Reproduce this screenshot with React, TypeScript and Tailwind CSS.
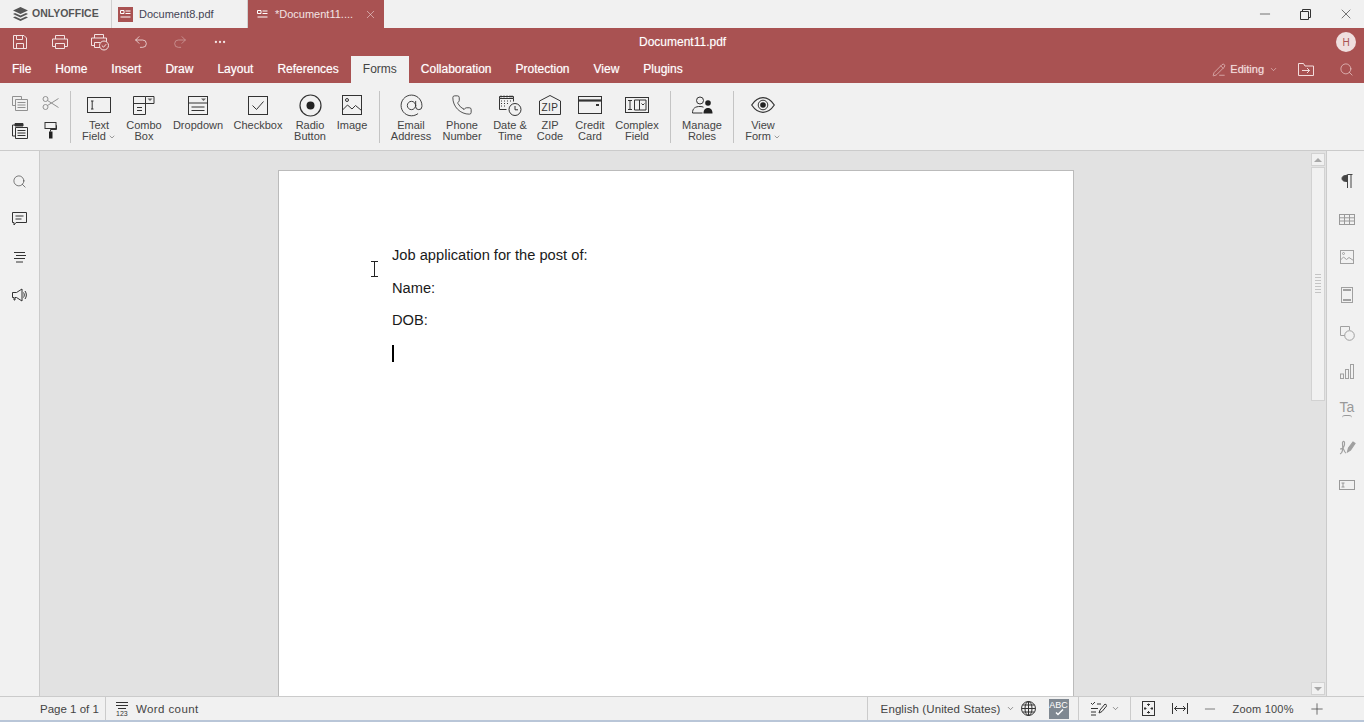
import React from "react";
import { Search, X, Minus, Plus, ChevronDown, Phone, AtSign, Undo2, Redo2, Ellipsis, PencilLine } from "lucide-react";

const S = ({ w = 24, h = 24, vb, children, c = "currentColor", sw = 1, className = "" }: any) => (
  <svg width={w} height={h} viewBox={vb || `0 0 ${w} ${h}`} fill="none" stroke={c} strokeWidth={sw} className={className}>{children}</svg>
);

const SaveI = () => <S w={16} h={16}><path d="M1.5 1.5h10.5l2.5 2.5v10.5h-13z" /><path d="M4.5 1.5v4h6v-4M4.5 14.5v-5h7v5" /></S>;
const PrintI = () => <S w={18} h={16}><path d="M4.5 5V1.5h9V5M4.5 12.5H1.5v-7.5h15v7.5h-3" /><path d="M4.5 9.5h9v5h-9z" /></S>;
const QuickI = () => (
  <S w={20} h={18}>
    <path d="M4.5 5V1.5h9V5M4.5 12.5H1.5v-7.5h15v5" /><path d="M4.5 9.5h6v5h-6z" />
    <circle cx="14" cy="12.5" r="4.5" fill="#a95252" /><path d="M11.8 12.5l1.7 1.7 2.7-3" />
  </S>
);
const TextFieldI = () => <S w={24} h={16}><rect x=".5" y=".5" width="23" height="15" /><path d="M4 4h2.5M4 12h2.5M5.2 4v8" /></S>;
const ComboI = () => (
  <S w={22} h={19}>
    <path d="M.5 .5h12v18H.5zM.5 7.5h12M12.5 .5h8.5v7h-8.5" />
    <path d="M14.5 2.5h5l-2.5 2.5z" fill="#666" stroke="none" />
    <path d="M4 11.5h5M4 14.5h5" />
  </S>
);
const DropI = () => (
  <S w={20} h={19}>
    <rect x=".5" y=".5" width="19" height="18" /><path d="M.5 7h19M3.5 11h13M3.5 14.5h13" />
    <path d="M13 2.5h5l-2.5 2.5z" fill="#666" stroke="none" />
  </S>
);
const CheckI = () => <S w={20} h={19}><rect x=".5" y=".5" width="19" height="18" /><path d="M4.5 9.5l4 4 7-8" /></S>;
const RadioI = () => <S w={23} h={23}><circle cx="11.5" cy="11.5" r="10.5" strokeWidth="1.2" /><circle cx="11.5" cy="11.5" r="4" fill="#222" stroke="none" /></S>;
const ImageI = () => <S w={20} h={20}><rect x=".5" y=".5" width="19" height="19" /><circle cx="5" cy="5" r="1.5" /><path d="M.5 15l5-5 4.5 4 3.5-3.5 6 5" /></S>;
const DateI = () => (
  <S w={23} h={21}>
    <path d="M.5 1.5h14v2H.5zM.5 3.5v11h7M14.5 3.5v3" />
    <path d="M2 .5v2M5 .5v2M8 .5v2M11 .5v2M13 .5v2" />
    <path d="M2 6h2M5 6h2M8 6h2M11 6h2M2 8.5h2M5 8.5h2M8 8.5h2M2 11h2M5 11h2" strokeDasharray="1 1" />
    <circle cx="16" cy="14.5" r="6" /><path d="M16 11v3.8h3" />
  </S>
);
const ZipI = () => (
  <S w={22} h={20}>
    <path d="M.5 6L11 .5 21.5 6v13.5H.5z" />
    <text x="11" y="16" textAnchor="middle" fontSize="10" letterSpacing="0.4" fontFamily="Liberation Sans" fill="#333" stroke="none">ZIP</text>
  </S>
);
const CardI = () => <S w={24} h={18}><rect x=".5" y=".5" width="23" height="17" /><path d="M.5 4.5h23" strokeWidth="2.2" /><path d="M18 9h3" strokeWidth="2" /></S>;
const ComplexI = () => (
  <S w={24} h={16}>
    <rect x=".5" y=".5" width="23" height="15" /><path d="M3 3.5h4M3 12.5h4M5 3.5v9" />
    <path d="M9.5 3h5v10h-5zM14.5 3h6.5v10h-6.5z" /><path d="M16.5 6.5l1.5 1.5 1.5-1.5" />
  </S>
);
const RolesI = () => (
  <S w={21} h={18}>
    <circle cx="8" cy="4.5" r="3.5" /><path d="M.5 17c0-5 3-6.5 7.5-6.5 1.5 0 2.6.3 3.5.7M.5 17h10" />
    <circle cx="16" cy="7" r="2.8" fill="#222" stroke="none" /><path d="M11.5 17.5c0-4 2-5.5 4.5-5.5s4.500 1.500 4.500 5.500z" fill="#222" stroke="none" />
  </S>
);
const EyeI = () => (
  <S w={24} h={16}>
    <path d="M.7 8C4 3 8 .7 12 .7S20 3 23.300 8C20 13 16 15.300 12 15.300S4 13 .7 8z" strokeWidth="1.200" />
    <circle cx="12" cy="8" r="4.800" /><circle cx="12" cy="8" r="2.800" fill="#222" stroke="none" />
  </S>
);
const CopyI = () => <S w={16} h={16}><path d="M.5 1.500h9v2.500M.5 1.500v9h2.500" /><path d="M3.500 4.500h12v11h-12z" /><path d="M5.500 7.500h8M5.500 10h8M5.500 12.500h8" /></S>;
const CutI = () => <S w={17} h={14}><circle cx="3.500" cy="3" r="2.500" /><circle cx="3.500" cy="11" r="2.500" /><path d="M5.500 4.500l11 7M5.500 9.500l11-7" /></S>;
const PasteI = () => <S w={16} h={17}><path d="M3 3H.5v11h2.500" /><path d="M3 1.500h8V4H3z" fill="#333" /><path d="M3.500 5.500h12v11h-12z" /><path d="M5.500 8.500h8M5.500 11h8M5.500 13.500h8" /></S>;
const FormatI = () => (
  <S w={13} h={17}>
    <rect x="1" y=".5" width="11" height="6" strokeWidth="1" /><path d="M12 3.500h.5v4H6.500v2" />
    <rect x="5" y="9.500" width="3.500" height="7" fill="#222" stroke="none" />
  </S>
);

const RB = ({ w, l1, l2, icon, chev }: any) => (
  <div className="flex flex-col items-center shrink-0 h-full" style={{ width: w }}>
    <div className="h-[37px] flex items-center justify-center pt-[7px]">{icon}</div>
    <div className="text-[11px] leading-[11px] text-center whitespace-nowrap text-[#444]">
      <div>{l1}</div>
      {l2 && <div className="flex items-center justify-center gap-[2px]">{l2}{chev && <ChevronDown size={8} strokeWidth={1.500} />}</div>}
    </div>
  </div>
);
const Sep = () => <div className="w-px h-[52px] bg-[#c4c4c4] shrink-0 mt-[8px]" />;

const Menu = ({ t, active }: any) => (
  <div className={active ? "px-3 h-full flex items-center pb-[1px] bg-[#f1f1f1] text-[#444]" : "px-3 h-full flex items-center pb-[1px] text-white [text-shadow:0_0_1px_rgba(255,255,255,0.55)]"}>{t}</div>
);

const SideIcon = ({ children }: any) => <div className="h-[38px] flex items-center justify-center">{children}</div>;
const Dv = () => <div className="w-px h-full bg-[#cbcbcb] shrink-0" />;

export default function App() {
  return (
    <div className="w-[1364px] h-[722px] overflow-hidden flex flex-col font-['Liberation_Sans',Arial,sans-serif] bg-[#f1f1f1]">
      {/* title bar */}
      <div className="h-[28px] flex items-stretch bg-[#f1f1f1] shrink-0">
        <div className="w-[112px] flex items-center pl-[13px] gap-[4px] border-r border-[#d0d0d0] text-[#555]">
          <svg width="15" height="14" viewBox="0 0 15 14" fill="#555">
            <path d="M7.500 0L15 3.500 7.500 7 0 3.500z" /><path d="M2 6l5.500 2.500L13 6l2 1-7.500 3.500L0 7z" /><path d="M2 9.500L7.500 12 13 9.500l2 1L7.500 14 0 10.500z" />
          </svg>
          <span className="text-[10.500px] font-bold whitespace-nowrap">ONLYOFFICE</span>
        </div>
        <div className="w-[136px] flex items-center pl-[6px] gap-[6px] border-r border-[#d0d0d0]">
          <div className="w-[15px] h-[15px] bg-[#a95252] flex items-center justify-center">
            <svg width="11" height="9" viewBox="0 0 11 9" fill="none" stroke="#fff"><path d="M.5 .5h3.500v3h-3.500zM5.500 1h5M5.500 3.500h5M.5 7h10" /></svg>
          </div>
          <span className="text-[11px] text-[#445]">Document8.pdf</span>
        </div>
        <div className="w-[136px] bg-[#a95252] flex items-center pl-[9px] text-[#f3e3e3]">
          <svg width="11" height="9" viewBox="0 0 11 9" fill="none" stroke="#fff"><path d="M.5 .5h3.500v3h-3.500zM5.500 1h5M5.500 3.500h5M.5 7h10" /></svg>
          <span className="text-[11px] ml-[7px] whitespace-nowrap">*Document11....</span>
          <X size={13} strokeWidth={1} className="ml-[11px]" />
        </div>
        <div className="flex-1" />
        <div className="flex items-center text-[#333]">
          <Minus size={16} strokeWidth={1} className="mr-[27px]" />
          <svg width="11" height="11" viewBox="0 0 11 11" fill="none" stroke="#333" className="mr-[27px]"><path d="M.5 2.500h8v8h-8zM2.500 2.500v-2h8v8h-2" /></svg>
          <X size={16} strokeWidth={1} className="mr-[10px]" />
        </div>
      </div>

      {/* red header */}
      <div className="h-[55px] bg-[#a95252] shrink-0 flex flex-col text-[#f3e3e3]">
        <div className="h-[28px] flex items-center relative shrink-0">
          <div className="w-[40px] flex justify-center"><SaveI /></div>
          <div className="w-[40px] flex justify-center"><PrintI /></div>
          <div className="w-[40px] flex justify-center"><QuickI /></div>
          <div className="w-[41px] flex justify-center"><Undo2 size={16} strokeWidth={1.200} /></div>
          <div className="w-[38px] flex justify-center opacity-50"><Redo2 size={16} strokeWidth={1.200} /></div>
          <div className="w-[41px] flex justify-center"><Ellipsis size={14} strokeWidth={2} /></div>
          <div className="absolute left-[639px] text-[12px] text-white [text-shadow:0_0_1px_rgba(255,255,255,0.4)]">Document11.pdf</div>
          <div className="ml-auto mr-[8px] w-[20px] h-[20px] rounded-full bg-[#f0dfdf] text-[#a95252] text-[10px] flex items-center justify-center">H</div>
        </div>
        <div className="h-[27px] flex items-center text-[12px]">
          {["File", "Home", "Insert", "Draw", "Layout", "References"].map((t) => <Menu key={t} t={t} />)}
          <Menu t="Forms" active />
          {["Collaboration", "Protection", "View", "Plugins"].map((t) => <Menu key={t} t={t} />)}
          <div className="ml-auto flex items-center text-[#f3dcdc]">
            <PencilLine size={14} strokeWidth={1} />
            <span className="ml-[4px] text-[11px] [text-shadow:0_0_1px_rgba(255,255,255,0.5)]">Editing</span>
            <ChevronDown size={9} strokeWidth={1.500} className="ml-[5px]" />
            <svg width="16" height="13" viewBox="0 0 16 13" fill="none" stroke="currentColor" className="ml-[20px]"><path d="M.5 12.500V.5h5l1.500 2.500h8.500v9.500zM4 7.500h7.500M9 5l2.500 2.500L9 10" /></svg>
            <Search size={15} strokeWidth={1} className="ml-[25px] mr-[10px]" />
          </div>
        </div>
      </div>

      {/* ribbon */}
      <div className="h-[68px] shrink-0 flex items-stretch border-b border-[#cbcbcb] bg-[#f1f1f1] text-[#333]">
        <div className="w-[70px] shrink-0 grid grid-cols-2 grid-rows-2 pl-[5px] pr-[4px] pt-[6px] pb-[6px] place-items-center">
          <span className="opacity-50"><CopyI /></span>
          <span className="opacity-50"><CutI /></span>
          <PasteI />
          <FormatI />
        </div>
        <Sep />
        <RB w={56} l1="Text" l2="Field" chev icon={<TextFieldI />} />
        <RB w={34} l1="Combo" l2="Box" icon={<ComboI />} />
        <RB w={74} l1="Dropdown" icon={<DropI />} />
        <RB w={46} l1="Checkbox" icon={<CheckI />} />
        <RB w={58} l1="Radio" l2="Button" icon={<RadioI />} />
        <RB w={26} l1="Image" icon={<ImageI />} />
        <div className="w-[14px] shrink-0" />
        <Sep />
        <RB w={62} l1="Email" l2="Address" icon={<AtSign size={25} strokeWidth={0.9} />} />
        <RB w={40} l1="Phone" l2="Number" icon={<Phone size={22} strokeWidth={0.9} />} />
        <RB w={56} l1="Date &" l2="Time" icon={<DateI />} />
        <RB w={24} l1="ZIP" l2="Code" icon={<ZipI />} />
        <RB w={56} l1="Credit" l2="Card" icon={<CardI />} />
        <RB w={38} l1="Complex" l2="Field" icon={<ComplexI />} />
        <div className="w-[14px] shrink-0" />
        <Sep />
        <RB w={62} l1="Manage" l2="Roles" icon={<RolesI />} />
        <Sep />
        <RB w={58} l1="View" l2="Form" chev icon={<EyeI />} />
      </div>

      {/* body */}
      <div className="flex-1 min-h-0 flex">
        <div className="w-[40px] shrink-0 border-r border-[#cbcbcb] pt-[11px] flex flex-col text-[#333]">
          <SideIcon><Search size={15} strokeWidth={1} /></SideIcon>
          <SideIcon>
            <svg width="15" height="14" viewBox="0 0 15 14" fill="none" stroke="#333"><path d="M.5 .5h14v10H4L2 13v-2.500H.5z" /><path d="M3.500 4h8M3.500 7h6" /></svg>
          </SideIcon>
          <SideIcon>
            <svg width="14" height="11" viewBox="0 0 14 11" fill="none" stroke="#333"><path d="M1 .5h11M3 3.500h10M1 6.500h11M3 10h7" /></svg>
          </SideIcon>
          <SideIcon>
            <svg width="16" height="14" viewBox="0 0 16 14" fill="none" stroke="#333"><path d="M.5 4.500h4L10 1v12L4.500 9.500H3V12H2V9.500H.5zM11.500 4.500c1 1.500 1 3.500 0 5M13 3c1.800 2.400 1.800 5.600 0 8" /></svg>
          </SideIcon>
        </div>
        <div className="flex-1 min-w-0 bg-[#e2e2e2] flex overflow-hidden">
          <div className="flex-1 pl-[238px] pt-[19px] min-w-0">
            <div className="relative w-[796px] h-full bg-white border-x border-t border-[#bbbbbb] pl-[113px] pt-[74px] text-[14.67px] text-[#1a1a1a]">
              <div className="h-[32.500px] leading-[20px]">Job application for the post of:</div>
              <div className="h-[32.500px] leading-[20px]">Name:</div>
              <div className="h-[32.500px] leading-[20px]">DOB:</div>
              <div className="w-[2px] h-[17px] bg-black mt-[2px]" />
              <svg width="8" height="16" viewBox="0 0 8 16" fill="none" stroke="#222" className="absolute left-[92px] top-[90px]">
                <path d="M0 .5h7M0 15.500h7M3.500 .5v15" />
              </svg>
            </div>
          </div>
          <div className="w-[14px] shrink-0 flex flex-col pt-[2px] pb-[1px] mr-[1px]">
            <div className="h-[13px] border border-[#d2d2d2] bg-[#f1f1f1] flex items-center justify-center">
              <div className="w-0 h-0 border-x-[4px] border-x-transparent border-b-[4px] border-b-[#a8a8a8]" />
            </div>
            <div className="h-[234px] mt-[1px] border border-[#d2d2d2] bg-[#f1f1f1] flex flex-col items-center justify-center gap-[1px]">
              {Array.from({ length: 7 }).map((_, i) => <div key={i} className="w-[6px] h-px bg-[#c4c4c4] mb-px" />)}
            </div>
            <div className="flex-1" />
            <div className="h-[13px] border border-[#d2d2d2] bg-[#f1f1f1] flex items-center justify-center">
              <div className="w-0 h-0 border-x-[4px] border-x-transparent border-t-[4px] border-t-[#a8a8a8]" />
            </div>
          </div>
        </div>
        <div className="w-[38px] shrink-0 border-l border-[#cbcbcb] pt-[11px] pl-[3px] flex flex-col text-[#a0a0a0]">
          <SideIcon><svg width="12" height="14" viewBox="0 0 12 14" fill="none" stroke="#444"><path d="M5 1.500C2 1.500 1 3 1 4.500S2 7.500 6 7.500V1z" fill="#444" /><path d="M6.500 .5h5M6.500 .5v13.500M10 .5v13.500" /></svg></SideIcon>
          <SideIcon><svg width="16" height="11" viewBox="0 0 16 11" fill="none" stroke="#999"><rect x=".5" y=".5" width="15" height="10" /><path d="M.5 3.800h15M.5 7h15M5.500 .5v10M10.500 .5v10" strokeWidth="1" /></svg></SideIcon>
          <SideIcon><svg width="14" height="14" viewBox="0 0 14 14" fill="none" stroke="#a0a0a0"><rect x=".5" y=".5" width="13" height="13" /><circle cx="3.500" cy="3.500" r="1" /><path d="M.5 10l3-3 3 2.500 2.500-2 4.500 3" /></svg></SideIcon>
          <SideIcon><svg width="12" height="16" viewBox="0 0 12 16" fill="none" stroke="#a0a0a0"><rect x=".5" y=".5" width="11" height="15" /><path d="M2 3h8M2 13h8" strokeWidth="2" /></svg></SideIcon>
          <SideIcon><svg width="15" height="15" viewBox="0 0 15 15" fill="none" stroke="#a0a0a0"><path d="M5 9.500H.5V.5h9V4" /><circle cx="9.500" cy="9.500" r="4.800" fill="#f1f1f1" /></svg></SideIcon>
          <SideIcon><svg width="14" height="15" viewBox="0 0 14 15" fill="none" stroke="#a0a0a0"><rect x=".5" y="10" width="3" height="4.500" /><rect x="5.500" y="5.500" width="3" height="9" /><rect x="10.500" y=".5" width="3" height="14" /></svg></SideIcon>
          <SideIcon><div className="relative w-[16px] h-[18px] text-[14px] leading-[14px] text-center text-[#999]">Ta<div className="absolute bottom-0 left-[3px] w-[10px] h-[3px] border-t border-[#999] rounded-t-full" /></div></SideIcon>
          <SideIcon><svg width="17" height="15" viewBox="0 0 17 15" fill="none" stroke="#a0a0a0" strokeWidth="1.200"><path d="M1 14c3-1 3-6 2.500-10C3 1.500 5 .5 5.500 2.500 6 6 4 9 1 9M4 8c1 2 2 5 3 5" /><path d="M8.500 12l1-4L14 2l2 1.500-4.500 6.500z" fill="#a0a0a0" /></svg></SideIcon>
          <SideIcon><svg width="16" height="10" viewBox="0 0 16 10" fill="none" stroke="#999"><rect x=".5" y=".5" width="15" height="9" /><path d="M2.500 3h3M2.500 7h3M4 3v4" /></svg></SideIcon>
        </div>
      </div>

      {/* status bar */}
      <div className="h-[26px] shrink-0 border-t border-[#cbcbcb] border-b-2 border-b-[#b9c6d8] bg-[#f1f1f1] flex items-center text-[11.500px] text-[#444]">
        <div className="w-[105px] pl-[40px] pt-[2px] whitespace-nowrap">Page 1 of 1</div>
        <Dv />
        <svg width="13" height="14" viewBox="0 0 13 14" fill="none" stroke="#333" className="ml-[10px]"><path d="M0 .5h12M0 3.500h12M2 6.500h8" /><text x="0" y="13.500" fontSize="7" fontFamily="Liberation Sans" fill="#333" stroke="none">123</text></svg>
        <span className="ml-[7px] pt-[2px] whitespace-nowrap tracking-[0.4px]">Word count</span>
        <div className="ml-[668px] h-full"><Dv /></div>
        <span className="ml-[13px] pt-[2px] whitespace-nowrap tracking-[0.1px]">English (United States)</span>
        <ChevronDown size={9} strokeWidth={1.500} className="ml-[5px]" />
        <svg width="15" height="15" viewBox="0 0 15 15" fill="none" stroke="#333" className="ml-[6px]"><circle cx="7.500" cy="7.500" r="7" /><ellipse cx="7.500" cy="7.500" rx="3.500" ry="7" /><path d="M7.500 .5v14M1.500 4h12M.5 7.500h14M1.500 11h12" /></svg>
        <div className="ml-[13px] w-[20px] h-[20px] bg-[#7f8891] flex flex-col items-center justify-center text-white text-[9px] leading-[8px]">
          <span>ABC</span>
          <svg width="12" height="7" viewBox="0 0 12 7" fill="none" stroke="#fff" strokeWidth="1.500"><path d="M3 3.500l2 2 5-5" /></svg>
        </div>
        <div className="ml-[9px] h-full"><Dv /></div>
        <svg width="16" height="15" viewBox="0 0 16 15" fill="none" stroke="#333" className="ml-[12px]"><path d="M0 2l1.500 1.500L4 1M6 3h4M0 7.500h7M0 11h5M0 14h5M8 12l1-3 5-6 2 1.500-5 6z" /></svg>
        <ChevronDown size={9} strokeWidth={1.500} className="ml-[4px]" />
        <div className="ml-[10px] h-full"><Dv /></div>
        <svg width="13" height="15" viewBox="0 0 13 15" fill="none" stroke="#333" className="ml-[11px]"><rect x=".5" y=".5" width="12" height="14" /><path d="M6.500 2.500v2.500M5 3.500h3M6.500 10v2.500M5 11.500h3M2 7.500h2.500M3 6v3M8.500 7.500H11M10 6v3" /></svg>
        <svg width="16" height="11" viewBox="0 0 16 11" fill="none" stroke="#333" className="ml-[17px]"><path d="M.5 0v11M15.500 0v11M2.500 5.500h11M5 3L2.500 5.500 5 8M11 3l2.500 2.500L11 8" /></svg>
        <Minus size={16} strokeWidth={1} className="ml-[14px]" />
        <span className="ml-[15px] pt-[2px] text-[11px] tracking-[0.2px] whitespace-nowrap">Zoom 100%</span>
        <Plus size={18} strokeWidth={1} className="ml-[14px]" />
      </div>
    </div>
  );
}
